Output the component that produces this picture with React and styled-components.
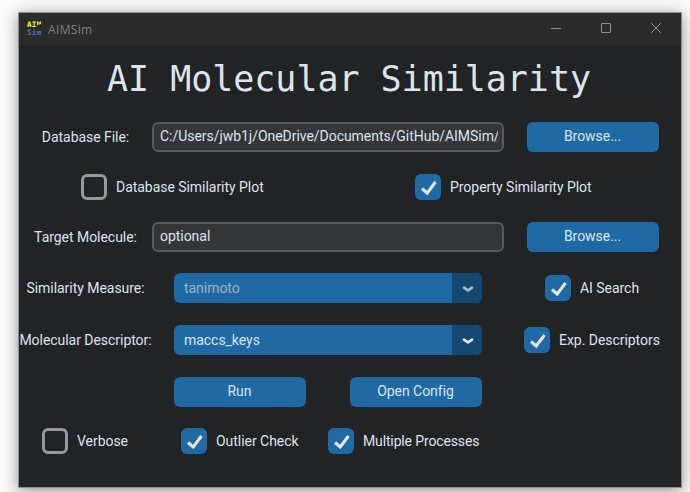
import React from "react";
import styled, { createGlobalStyle } from "styled-components";

const GlobalStyle = createGlobalStyle`
  * { box-sizing: border-box; }
  html, body { margin: 0; height: 492px; overflow: hidden; background: #fafafa; }
`;

const Desktop = styled.main`
  width: 690px;
  height: 492px;
  padding: 12px 8px 4px 18px;
  overflow: hidden;
`;

const Window = styled.section`
  width: 664px;
  height: 476px;
  border: 1px solid #8f8f8f;
  background: #212325;
  box-shadow: 0 3px 15px rgba(0, 0, 0, 0.42);
  color: #dce4ee;
  font: 14px/18px Roboto, sans-serif;
  letter-spacing: -0.04px;
`;

const TitleBar = styled.header`
  height: 32px;
  display: flex;
  align-items: center;
  padding-left: 8px;
  background: #2b2b2b;
  color: #808080;
`;

const AppIcon = styled.div`
  width: 16px;
  height: 16px;
  margin-right: 5px;
  font: bold 7.5px/8px "DejaVu Sans Mono", monospace;
  letter-spacing: 0.3px;
  white-space: nowrap;
`;

const IconLine = styled.div`
  height: 8px;
  line-height: 8px;
  color: ${(p) => p.$color};
`;

const IconShade = styled.span`
  color: transparent;
  background: linear-gradient(160deg, #ffff00 45%, #101010 60%);
  background-clip: text;
`;

const WindowName = styled.span`
  flex: 1;
  font: 12px/16px "Open Sans", sans-serif;
  letter-spacing: 0.35px;
  padding-top: 1px;
`;

const Controls = styled.div`
  display: flex;
  height: 30px;
  align-self: flex-start;
`;

const Control = styled.div`
  width: 50px;
  display: flex;
  align-items: center;
  justify-content: center;
`;

const Heading = styled.h1`
  margin: 0;
  height: 77px;
  padding: 13px 0 0 88px;
  font: 35px/42px "DejaVu Sans Mono", monospace;
  letter-spacing: -0.03px;
  white-space: pre;
  color: #dce4ee;
`;

const Row = styled.div`
  display: grid;
  grid-template-columns: ${(p) => p.$columns};
  align-items: center;
  height: ${(p) => p.$height || 30}px;
  margin-bottom: ${(p) => p.$after || 0}px;
  padding-left: ${(p) => p.$inset || 0}px;
`;

const Label = styled.label`
  text-align: center;
  white-space: nowrap;
`;

const Entry = styled.div`
  height: 30px;
  width: 352px;
  padding: 0 4px 0 6px;
  border: 2px solid #565b5e;
  border-radius: 6px;
  background: #343638;
`;

const EntryText = styled.div`
  line-height: 25px;
  overflow: hidden;
  white-space: nowrap;
`;

const Button = styled.button`
  width: 132px;
  height: 30px;
  padding: 0 1px 2px 0;
  border: 0;
  border-radius: 6px;
  background: #1f6aa5;
  color: #dce4ee;
  font: inherit;
  letter-spacing: inherit;
`;

const Select = styled.div`
  display: flex;
  width: 308px;
  height: 30px;
  border-radius: 6px;
  overflow: hidden;
  background: #1f6aa5;
  color: ${(p) => (p.$muted ? "#a4b1bc" : "#dce4ee")};
`;

const SelectValue = styled.span`
  flex: 1;
  padding-left: 10px;
  line-height: 30px;
`;

const SelectArrow = styled.span`
  width: 30px;
  display: flex;
  align-items: center;
  justify-content: center;
  padding: 2px 0 0 2px;
  background: #144870;
  color: ${(p) => (p.$muted ? "#b3b8bc" : "#dce4ee")};
`;

const Check = styled.label`
  display: flex;
  align-items: center;
  gap: 9px;
  white-space: nowrap;
  letter-spacing: ${(p) => (p.$tight ? "-0.14px" : "inherit")};
`;

const Box = styled.span`
  width: 26px;
  height: 26px;
  flex: none;
  border-radius: 6px;
  border: ${(p) => (p.$on ? "0" : "3px solid #949a9f")};
  background: ${(p) => (p.$on ? "#1f6aa5" : "transparent")};
`;

const Tick = styled.svg`
  display: block;
`;

function Option({ on, tight, children }) {
  return (
    <Check $tight={tight}>
      <Box $on={on}>
        {on && (
          <Tick width="26" height="26" fill="none" stroke="#e5e5e5" strokeWidth="3">
            <path d="M7 14.5 12.2 19 20.5 8" />
          </Tick>
        )}
      </Box>
      {children}
    </Check>
  );
}

function Dropdown({ value, muted }) {
  return (
    <Select $muted={muted}>
      <SelectValue>{value}</SelectValue>
      <SelectArrow $muted={muted}>
        <svg width="12" height="8" fill="none" stroke="currentColor" strokeWidth="2.7" strokeLinecap="round" strokeLinejoin="round">
          <path d="M2 2.6 6 5.3 10 2.6" />
        </svg>
      </SelectArrow>
    </Select>
  );
}

export default function App() {
  return (
    <Desktop>
      <GlobalStyle />
      <Window>
        <TitleBar>
          <AppIcon>
            <IconLine $color="#ffff00">AI<IconShade>M</IconShade></IconLine>
            <IconLine $color="#4472c4">Sim</IconLine>
          </AppIcon>
          <WindowName>AIMSim</WindowName>
          <Controls>
            <Control>
              <svg width="10" height="10" stroke="#929292"><path d="M0 5.5H10" /></svg>
            </Control>
            <Control>
              <svg width="10" height="10" fill="none" stroke="#929292"><path d="M.5.5h9v9h-9z" /></svg>
            </Control>
            <Control>
              <svg width="10" height="10" stroke="#929292"><path d="M0 0 10 10M10 0 0 10" /></svg>
            </Control>
          </Controls>
        </TitleBar>
        <Heading>AI Molecular Similarity</Heading>
        <Row $columns="133px 375px 132px" $after={22}>
          <Label>Database File:</Label>
          <Entry><EntryText>C:/Users/jwb1j/OneDrive/Documents/GitHub/AIMSim/</EntryText></Entry>
          <Button>Browse...</Button>
        </Row>
        <Row $columns="334px auto" $height={26} $inset={62} $after={22}>
          <Option>Database Similarity Plot</Option>
          <Option on>Property Similarity Plot</Option>
        </Row>
        <Row $columns="133px 375px 132px" $after={21}>
          <Label>Target Molecule:</Label>
          <Entry><EntryText>optional</EntryText></Entry>
          <Button>Browse...</Button>
        </Row>
        <Row $columns="133px 22px 371px auto" $after={22}>
          <Label>Similarity Measure:</Label>
          <span />
          <Dropdown value="tanimoto" muted />
          <Option on>AI Search</Option>
        </Row>
        <Row $columns="133px 22px 350px auto" $after={22}>
          <Label>Molecular Descriptor:</Label>
          <span />
          <Dropdown value="maccs_keys" />
          <Option on>Exp. Descriptors</Option>
        </Row>
        <Row $columns="176px 132px" $inset={155} $after={21}>
          <Button>Run</Button>
          <Button>Open Config</Button>
        </Row>
        <Row $columns="139px 147px auto" $height={26} $inset={23}>
          <Option>Verbose</Option>
          <Option on>Outlier Check</Option>
          <Option on tight>Multiple Processes</Option>
        </Row>
      </Window>
    </Desktop>
  );
}
